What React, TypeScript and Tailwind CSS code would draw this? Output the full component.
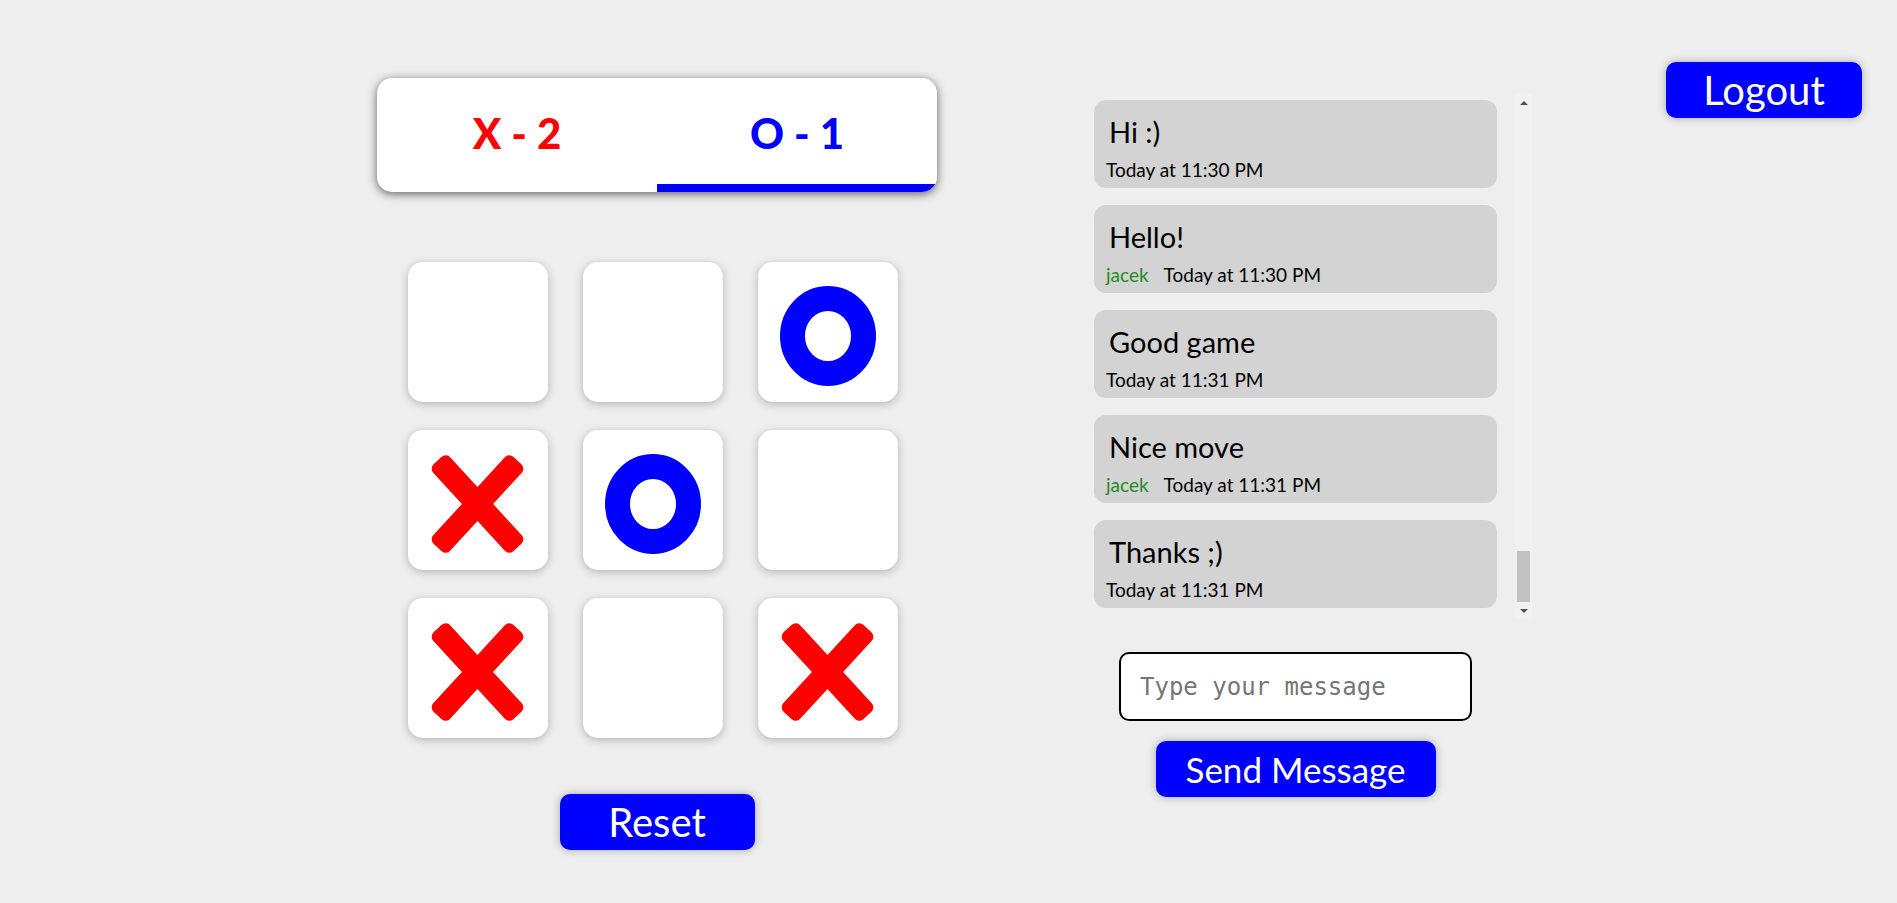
import React from "react";

type Mark = "X" | "O" | null;

const BOARD: Mark[] = ["", "", "O", "X", "O", "", "X", "", "X"].map((m) =>
  m === "" ? null : (m as Mark),
);

type Message = {
  text: string;
  time: string;
  author?: string;
};

const MESSAGES: Message[] = [
  { text: "Hi :)", time: "Today at 11:30 PM" },
  { text: "Hello!", time: "Today at 11:30 PM", author: "jacek" },
  { text: "Good game", time: "Today at 11:31 PM" },
  { text: "Nice move", time: "Today at 11:31 PM", author: "jacek" },
  { text: "Thanks ;)", time: "Today at 11:31 PM" },
];

const XMark = () => (
  <svg viewBox="0 0 140 140" className="w-full h-full">
    <rect
      x={10.5}
      y={62.5}
      width={118}
      height={23}
      rx={6}
      fill="#ff0000"
      transform="rotate(47.5 69.5 74)"
    />
    <rect
      x={10.5}
      y={62.5}
      width={118}
      height={23}
      rx={6}
      fill="#ff0000"
      transform="rotate(-47.5 69.5 74)"
    />
  </svg>
);

const OMark = () => (
  <svg viewBox="0 0 140 140" className="w-full h-full">
    <ellipse
      cx={70}
      cy={74}
      rx={35.5}
      ry={37.5}
      fill="none"
      stroke="#0000ff"
      strokeWidth={25}
    />
  </svg>
);

const Cell = ({ mark }: { mark: Mark }) => (
  <div className="w-[140px] h-[140px] bg-white rounded-[15px] shadow-[0_2px_8px_rgba(0,0,0,0.25)]">
    {mark === "X" && <XMark />}
    {mark === "O" && <OMark />}
  </div>
);

const ChatBubble = ({ msg }: { msg: Message }) => (
  <div className="h-[88px] shrink-0 rounded-[12px] bg-[#d3d3d3] pl-[12px]">
    <p className="pt-[14px] pl-[3px] text-[29px] leading-[35px] text-black">
      {msg.text}
    </p>
    <div className="mt-[10px] flex items-baseline gap-[15px] text-[19px] leading-[22px]">
      {msg.author && <span className="text-[#228b22]">{msg.author}</span>}
      <span className="text-black">{msg.time}</span>
    </div>
  </div>
);

export default function App() {
  return (
    <div className="min-h-screen bg-[#eeeeee] flex items-start font-['Lato',sans-serif]">
      {/* game column */}
      <div className="ml-[377px] mt-[78px] w-[560px] flex flex-col">
        <div className="h-[114px] bg-white rounded-[15px] overflow-hidden flex flex-col shadow-[0_2px_10px_rgba(0,0,0,0.6)]">
          <div className="flex-1 flex items-center">
            <div className="w-1/2 text-center text-[42px] font-black text-[#ff0000] pt-[4px]">
              X - 2
            </div>
            <div className="w-1/2 text-center text-[42px] font-black text-[#0000ff] pt-[4px]">
              O - 1
            </div>
          </div>
          <div className="h-[8px] flex">
            <div className="w-1/2" />
            <div className="w-1/2 bg-[#0000ff]" />
          </div>
        </div>

        <div className="mt-[70px] ml-[31px] grid grid-cols-[repeat(3,140px)] gap-x-[35px] gap-y-[28px]">
          {BOARD.map((m, i) => (
            <Cell key={i} mark={m} />
          ))}
        </div>

        <button className="mt-[56px] self-center w-[195px] h-[56px] rounded-[10px] bg-[#0000ff] text-white text-[40px] leading-none shadow-[0_0_8px_rgba(0,0,0,0.3)]">
          Reset
        </button>
      </div>

      {/* chat column */}
      <div className="ml-[157px] mt-[94px] w-[403px] flex flex-col items-center">
        <div className="self-start w-[438px] h-[525px] flex">
          <div className="w-[403px] shrink-0 flex flex-col gap-[17px] pt-[6px] overflow-hidden">
            {MESSAGES.map((msg, i) => (
              <ChatBubble key={i} msg={msg} />
            ))}
          </div>
          <div className="w-[18px] shrink-0" />
          <div className="w-[17px] shrink-0 bg-[#f1f1f1] flex flex-col">
            <div className="h-[17px] flex items-center justify-center">
              <div className="w-0 h-0 border-x-[4px] border-x-transparent border-b-[4px] border-b-[#505050]" />
            </div>
            <div className="flex-1 flex flex-col justify-end">
              <div className="h-[51px] mx-[2px] bg-[#c1c1c1]" />
            </div>
            <div className="h-[17px] flex items-center justify-center">
              <div className="w-0 h-0 border-x-[4px] border-x-transparent border-t-[4px] border-t-[#505050]" />
            </div>
          </div>
        </div>

        <input
          type="text"
          placeholder="Type your message"
          className="mt-[33px] w-[353px] h-[69px] rounded-[10px] border-2 border-black bg-white pl-[19px] text-[24px] font-['DejaVu_Sans_Mono',monospace] placeholder:text-[#757575] outline-none"
        />

        <button className="mt-[20px] w-[280px] h-[56px] rounded-[10px] bg-[#0000ff] text-white text-[35px] leading-none shadow-[0_0_8px_rgba(0,0,0,0.3)]">
          Send Message
        </button>
      </div>

      <button className="ml-auto mr-[35px] mt-[62px] w-[196px] h-[56px] rounded-[10px] bg-[#0000ff] text-white text-[40px] leading-none shadow-[0_0_8px_rgba(0,0,0,0.3)]">
        Logout
      </button>
    </div>
  );
}
